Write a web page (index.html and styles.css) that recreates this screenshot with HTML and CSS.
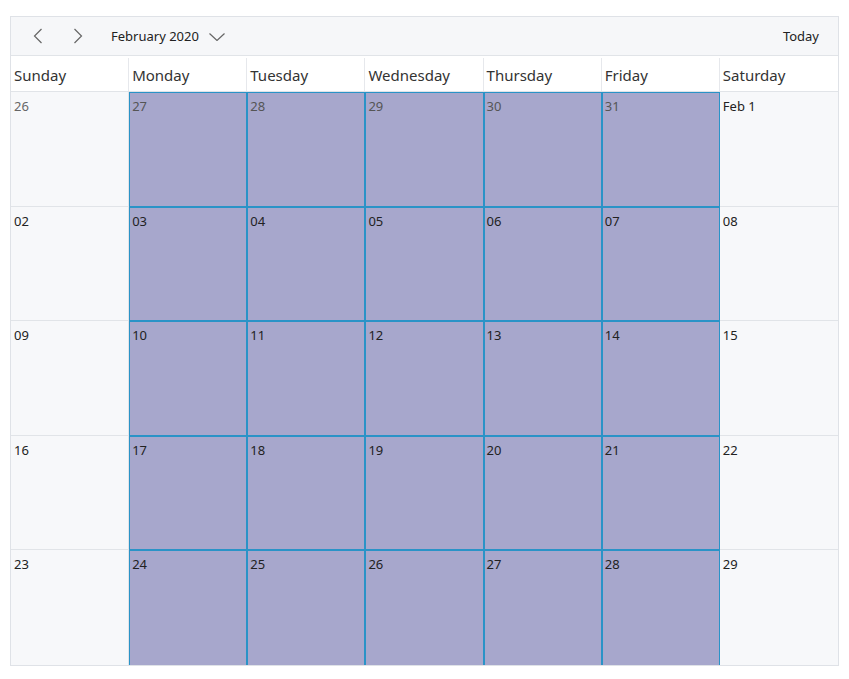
FILE: index.html
```html
<!DOCTYPE html>
<html lang="en">
<head>
    <meta charset="UTF-8">
    <title>Month View</title>
    <link rel="stylesheet" href="styles.css">
</head>
<body>
    <div class="calendar">
        <div class="toolbar">
            <button class="nav-btn" aria-label="Previous">
                <svg width="10" height="16" viewBox="0 0 10 16"><path d="M8.5 1 L1.5 8 L8.5 15" fill="none" stroke="#666" stroke-width="1.2"/></svg>
            </button>
            <button class="nav-btn" aria-label="Next">
                <svg width="10" height="16" viewBox="0 0 10 16"><path d="M1.5 1 L8.5 8 L1.5 15" fill="none" stroke="#666" stroke-width="1.2"/></svg>
            </button>
            <div class="period">
                <span>February 2020</span>
                <svg width="16" height="8" viewBox="0 0 16 8"><path d="M0.5 0.5 L8 7.5 L15.5 0.5" fill="none" stroke="#666" stroke-width="1.2"/></svg>
            </div>
            <div class="today">Today</div>
        </div>

        <div class="day-names">
            <div class="day-name">Sunday</div>
            <div class="day-name">Monday</div>
            <div class="day-name">Tuesday</div>
            <div class="day-name">Wednesday</div>
            <div class="day-name">Thursday</div>
            <div class="day-name">Friday</div>
            <div class="day-name">Saturday</div>
        </div>

        <div class="month" id="month"></div>
    </div>

    <script>
        // Build the month grid: Jan 26 - Feb 29, weekdays selected
        const month = document.getElementById('month');
        const cells = [];
        for (let i = 0; i < 35; i++) {
            const col = i % 7;
            let label, other = false;
            if (i < 6) {
                label = String(26 + i);
                other = true;
            } else if (i === 6) {
                label = 'Feb 1';
            } else {
                label = String(i - 5).padStart(2, '0');
            }
            const classes = ['cell'];
            if (col > 0 && col < 6) classes.push('selected');
            if (other) classes.push('other');
            if (i >= 28) classes.push('last-row');
            if (col === 6) classes.push('last-col');
            cells.push(`<div class="${classes.join(' ')}"><span class="date">${label}</span></div>`);
        }
        month.innerHTML = cells.join('');
    </script>
</body>
</html>
```

FILE: styles.css
```css
body {
    margin: 0;
    font-family: "Noto Sans", "Open Sans", sans-serif;
    color: #222;
    background-color: white;
}
.calendar {
    margin: 16px 0 0 10px;
    width: 829px;
    height: 650px;
    box-sizing: border-box;
    border: 1px solid #dfe2e7;
    display: flex;
    flex-direction: column;
}
.toolbar {
    height: 38px;
    flex-shrink: 0;
    display: flex;
    align-items: center;
    background-color: #f6f7f9;
    border-bottom: 1px solid #e1e4e8;
    padding: 0 19px 0 21px;
}
.nav-btn {
    background: none;
    border: none;
    padding: 0;
    width: 12px;
    height: 18px;
    display: flex;
    align-items: center;
    justify-content: center;
    margin-right: 28px;
    cursor: pointer;
}
.period {
    display: flex;
    align-items: center;
    gap: 10px;
    font-size: 13px;
    color: #222;
    margin-left: -1px;
}
.period svg {
    margin-top: 1px;
}
.today {
    margin-left: auto;
    font-size: 13px;
    color: #222;
}
.day-names {
    height: 35px;
    flex-shrink: 0;
    display: grid;
    grid-template-columns: repeat(7, 1fr);
    background-color: white;
    border-bottom: 1px solid #e1e4e8;
}
.day-name {
    font-size: 15px;
    line-height: 20px;
    padding: 7px 3px 0;
    color: #333;
    border-right: 1px solid #e6e8ec;
    margin-top: 2px;
}
.day-name:last-child {
    border-right: none;
}
.month {
    flex: 1;
    display: grid;
    grid-template-columns: repeat(7, 1fr);
    grid-template-rows: repeat(5, 1fr);
    background-color: #f7f8fa;
}
.cell {
    border-right: 1px solid #e1e4e8;
    border-bottom: 1px solid #e1e4e8;
    padding: 5px 3px;
    font-size: 13px;
    line-height: 18px;
    color: #222;
}
.cell.last-col {
    border-right: none;
}
.cell.last-row {
    border-bottom: none;
}
.cell.other {
    color: #666;
}
.cell.selected {
    background-color: #a7a7cc;
    border-right-color: #2a93c7;
    border-bottom-color: #2a93c7;
    box-shadow: inset 1px 1px 0 #2a93c7;
}
.cell.selected.other {
    color: #555;
}
```
